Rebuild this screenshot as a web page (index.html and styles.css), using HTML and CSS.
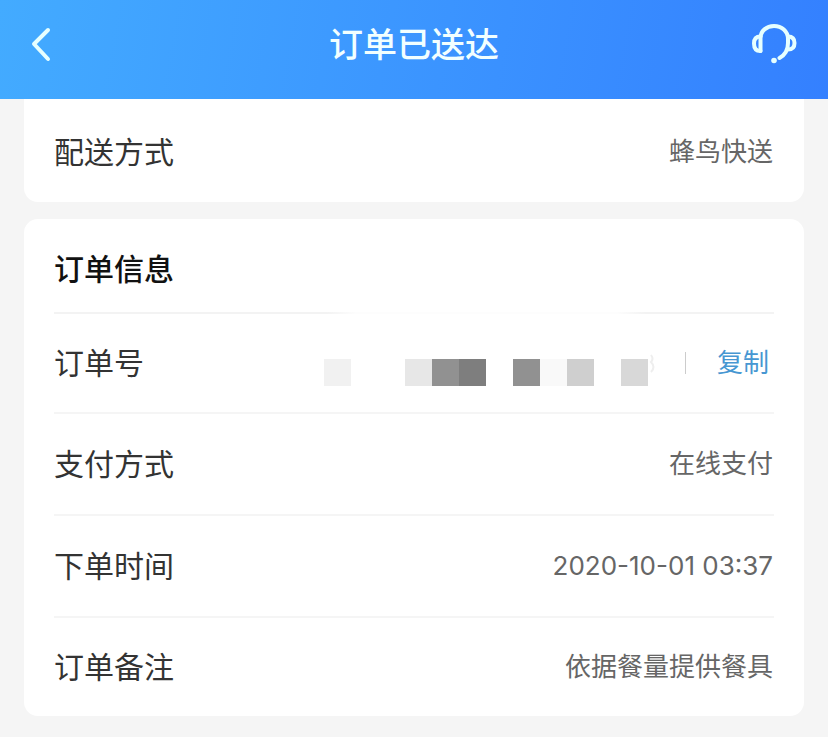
FILE: index.html
```html
<!DOCTYPE html>
<html lang="zh-CN">
<head>
    <meta charset="UTF-8">
    <meta name="viewport" content="width=device-width, initial-scale=1.0">
    <title>订单已送达</title>
    <link rel="stylesheet" href="styles.css">
</head>
<body>
    <header class="navbar">
        <button class="nav-btn" type="button" aria-label="返回">
            <svg class="icon-back" viewBox="0 0 24 40">
                <path d="M18 5 L4 19 L18 34" />
            </svg>
        </button>
        <h1>订单已送达</h1>
        <button class="nav-btn nav-btn-right" type="button" aria-label="联系客服">
            <svg class="icon-service" viewBox="0 0 48 44">
                <path d="M10.5 28 V15 C10.5 8 16.5 3 24 3 C31.5 3 38 8 38 16 V20 C38 27.500 35 32 29.500 35" />
                <path d="M10.5 13.500 C6 13.500 4 16 4 20.500 C4 25.500 6 28 10.5 28" />
                <path d="M38 13.500 C42.500 13.500 44.500 16 44.500 20 C44.500 24.500 42.500 26.500 38 26.500" />
                <circle cx="24" cy="37.500" r="2.800" />
            </svg>
        </button>
    </header>

    <main class="content">
        <section class="card card-delivery">
            <div class="row">
                <span class="label">配送方式</span>
                <span class="value">蜂鸟快送</span>
            </div>
        </section>

        <section class="card">
            <h2>订单信息</h2>
            <div class="row row-number">
                <span class="label">订单号</span>
                <div class="number">
                    <!-- 打码的订单号 -->
                    <div class="mosaic">
                        <i class="g1"></i><i></i><i></i><i class="g2"></i><i class="g5"></i><i class="g6"></i><i></i><i class="g5"></i><i class="g0"></i><i class="g4"></i><i></i><i class="g3"></i>
                        <svg class="digit-edge" viewBox="0 0 8 27">
                            <path d="M3 -4 Q6 0 3 3 Q8 8 3 13" />
                        </svg>
                    </div>
                    <button class="copy-btn" type="button">复制</button>
                </div>
            </div>
            <div class="row">
                <span class="label">支付方式</span>
                <span class="value">在线支付</span>
            </div>
            <div class="row">
                <span class="label">下单时间</span>
                <span class="value">2020-10-01 03:37</span>
            </div>
            <div class="row">
                <span class="label">订单备注</span>
                <span class="value">依据餐量提供餐具</span>
            </div>
        </section>
    </main>
</body>
</html>
```

FILE: styles.css
```css
* {
    box-sizing: border-box;
}

body {
    margin: 0;
    background-color: #f5f5f5;
    font-family: Inter, "Noto Sans CJK SC", sans-serif;
    color: #333;
}

button {
    border: none;
    background: none;
    padding: 0;
    font-family: inherit;
    cursor: pointer;
}

.navbar {
    display: flex;
    align-items: center;
    justify-content: space-between;
    padding: 21px 30px 30px;
    background: linear-gradient(100deg, #43abff, #3480ff);
}

.navbar h1 {
    margin: 0;
    font-size: 34px;
    line-height: 48px;
    font-weight: 500;
    color: #f2ffff;
}

.nav-btn {
    display: flex;
    width: 48px;
}

.nav-btn-right {
    justify-content: flex-end;
}

.nav-btn svg {
    fill: none;
    stroke: #e6ffff;
    stroke-linecap: round;
    stroke-linejoin: round;
    flex-shrink: 0;
}

.icon-back {
    width: 24px;
    height: 40px;
    stroke-width: 4;
}

.icon-service {
    width: 48px;
    height: 44px;
    stroke-width: 4;
}

.nav-btn .icon-service circle {
    fill: #e6ffff;
    stroke: none;
}

.content {
    padding: 0 24px 20px;
}

.card {
    padding: 0 30px;
    margin-bottom: 17px;
    background-color: #fff;
    border-radius: 14px;
}

.card-delivery {
    border-radius: 0 0 14px 14px;
}

.card h2 {
    margin: 0;
    padding: 28px 0 21px;
    font-size: 30px;
    line-height: 44px;
    font-weight: 500;
    color: #111;
}

.row {
    display: flex;
    align-items: center;
    justify-content: space-between;
    min-height: 102px;
    border-top: 2px solid #f5f5f5;
}

.row:last-child {
    min-height: 100px;
}

.card-delivery .row {
    min-height: 103px;
    padding-top: 2px;
    border-top: none;
}

.row-number {
    min-height: 100px;
    border-image: linear-gradient(to right, #f3f3f3 38%, #fdfdfd 42%, #fdfdfd 78%, #f3f3f3 82%) 2;
}

.label {
    font-size: 30px;
    line-height: 44px;
}

.value {
    padding-right: 1px;
    font-size: 26px;
    line-height: 40px;
    color: #666;
}

.number {
    display: flex;
    align-items: center;
}

.mosaic {
    display: flex;
    padding-top: 18px;
}

.mosaic i {
    width: 27px;
    height: 27px;
}

.mosaic .g0 { background-color: #f9f9f9; }
.mosaic .g1 { background-color: #f1f1f1; }
.mosaic .g2 { background-color: #e7e7e7; }
.mosaic .g3 { background-color: #d8d8d8; }
.mosaic .g4 { background-color: #cfcfcf; }
.mosaic .g5 { background-color: #919191; }
.mosaic .g6 { background-color: #7e7e7e; }

.digit-edge {
    width: 8px;
    height: 27px;
    overflow: visible;
    fill: none;
    stroke: #eee;
    stroke-width: 2;
}

.copy-btn {
    display: flex;
    align-items: center;
    margin-left: 29px;
    padding-right: 5px;
    font-size: 26px;
    line-height: 40px;
    color: #4797d2;
}

.copy-btn::before {
    content: "";
    width: 1px;
    height: 22px;
    margin-right: 31px;
    background-color: #ccc;
}
```
